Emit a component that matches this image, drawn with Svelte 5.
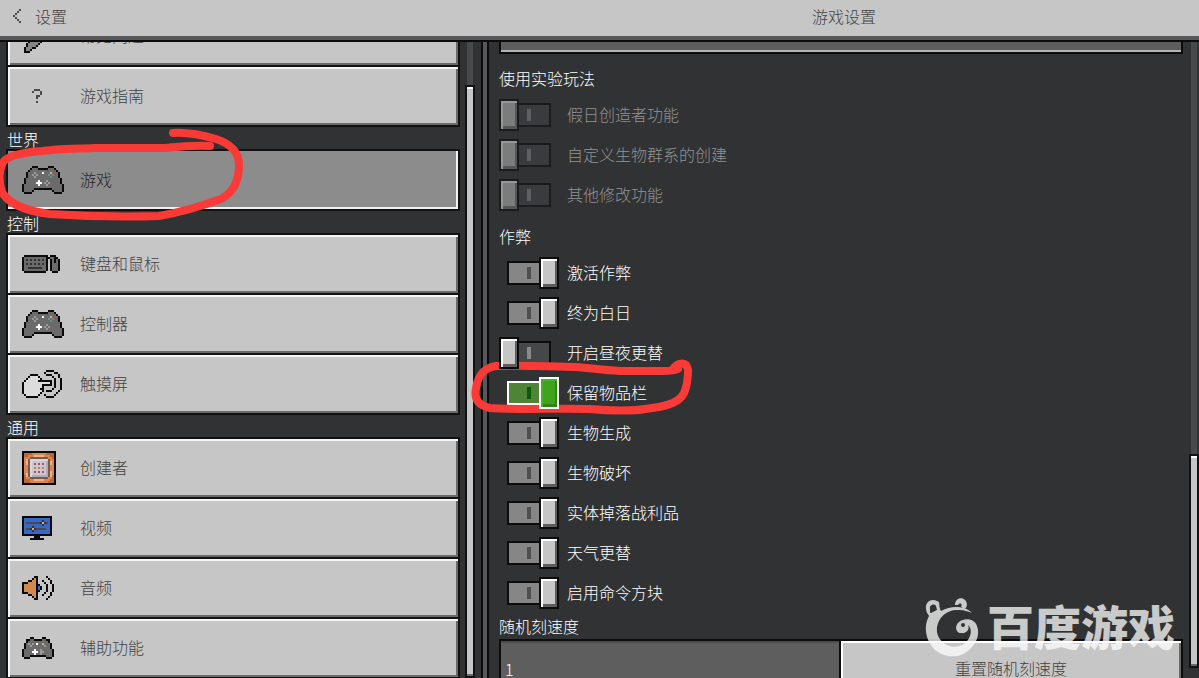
<script>
  const palette = {
    '#': '#0a0a0a', o: '#6b6b6b', l: '#9a9a9a', W: '#ffffff', w: '#dcdcdc', k: '#343434',
    y: '#e0b070', b: '#4aa0b8', r: '#c96a50', t: '#4f9c8c', O: '#cf8b4e', B: '#2f6fd0', q: '#4a4a4a'
  };

  const art = {
    gamepad: [
      '.....###.....###.....', '....#ooo#####ooo#....', '...#ooooooooooooo#...',
      '..#oooloooWoooyooo#..', '..#oololoooooboroo#..', '..#oooloooooootooo#..',
      '.#ooooooooooooooooo#.', '.#ooooooWoooloooooo#.', '.#oooooWWWololooooo#.',
      '#oooooooWoooloooooоo#'.slice(0, 18) + 'oo#', '#ooooooooooooooooooo#', '#ooooo#########ooooo#',
      '#oooo#.........#oooo#', '.####...........####.'
    ],
    keyboard: [
      '.############.###..', '#ooooooooooo##oo##.', '#okokokokoko#.#o#o#',
      '#ooooooooooo#.#o#o#', '#okokokokoko#.#ooo#', '#ooooooooooo#.#ooo#',
      '#ookkkkkkkoo#.#ooo#', '#ooooooooooo#.#ooo#', '.###########...###.'
    ],
    touch: [
      '............####....', '...........#....##..', '....####....###...#.',
      '...#wwww#......#..#.', '..#wwwwww#......#..#', '.#wwwwww#######.#..#',
      '#wwwwwwwwwwwww#.#..#', '#wwwwwwwww#####.#..#', '#wwwwwwwww#.....#..#',
      '#wwwwwwww##....#...#', '#wwwwwwwww#.###...#.', '#wwwwwwww#.......#..',
      '.#wwwwww#..#....#...', '..######....####....'
    ],
    speaker: [
      '......##....#...', '.....#O#.....#..', '...##OO#..#...#.', '###OOOO#...#..#.',
      '#OOOOOO##...#..#', '#OOOOOO#B#..#..#', '#OOOOOO#B#..#..#', '#OOOOOO##...#..#',
      '###OOOO#...#..#.', '...##OO#..#...#.', '.....#O#.....#..', '......##....#...'
    ],
    assist: [
      '....##....##....', '..##oo####oo##..', '..#oooooooooo#..', '.#ololoWooyooo#.',
      '.#oolooooooloo#.', '.#oooooooooooo#.', '#oooooWooloooooo'.slice(0, 15) + '#', '#ooooWWWolloooo#',
      '#oooooWooloooooo'.slice(0, 15) + '#', '#ooo########ooo#', '.###........###.'
    ],
    monitor: [
      '###############', '#BBBBBBBBBBBBB#', '#BBBBBBBBBkBBB#', '#BqqqqqqqkykqB#',
      '#BBBBBBBBBkBBB#', '#BBBBkBBBBBBBB#', '#BqqkykqqqqqBB#', '#BBBBkBBBBBBBB#',
      '#BBBBBBBBBBBBB#', '###############', '......###......', '....#######....'
    ].map((row) => (row.length < 15 ? row.slice(0, 7) + row[7] + row.slice(7) : row)),
    help: ['.qqq.', 'q...q', '....q', '..qq.', '..q..', '.....', '..q..'],
    back: ['...q', '..q.', '.q..', 'q...', '.q..', '..q.', '...q']
  };

  const groups = [
    { title: '', items: [
      { icon: 'pencil', label: '常见问题' },
      { icon: 'help', label: '游戏指南' }
    ] },
    { title: '世界', items: [{ icon: 'gamepad', label: '游戏', active: true }] },
    { title: '控制', items: [
      { icon: 'keyboard', label: '键盘和鼠标' },
      { icon: 'gamepad', label: '控制器' },
      { icon: 'touch', label: '触摸屏' }
    ] },
    { title: '通用', items: [
      { icon: 'creator', label: '创建者' },
      { icon: 'monitor', label: '视频' },
      { icon: 'speaker', label: '音频' },
      { icon: 'assist', label: '辅助功能' }
    ] }
  ];

  const experiments = ['假日创造者功能', '自定义生物群系的创建', '其他修改功能'];

  let cheats = $state([
    { label: '激活作弊', on: true },
    { label: '终为白日', on: true },
    { label: '开启昼夜更替', on: false },
    { label: '保留物品栏', on: true, focus: true },
    { label: '生物生成', on: true },
    { label: '生物破坏', on: true },
    { label: '实体掉落战利品', on: true },
    { label: '天气更替', on: true },
    { label: '启用命令方块', on: true }
  ]);
  let seed = $state('');
  let tickSpeed = $state('1');
</script>

{#snippet pixels(name)}
  {@const rows = art[name]}
  <svg width={rows[0].length * 2} height={rows.length * 2} viewBox="0 0 {rows[0].length} {rows.length}" shape-rendering="crispEdges" aria-hidden="true">
    {#each rows as row, y}
      {#each row.split('') as c, x}
        {#if c !== '.'}<rect {x} {y} width="1" height="1" fill={name === 'monitor' && c === 'B' ? '#3a66c8' : palette[c]} />{/if}
      {/each}
    {/each}
  </svg>
{/snippet}

<div class="page">
  <header>
    <button class="back">{@render pixels('back')}<span>设置</span></button>
    <h1>游戏设置</h1>
  </header>

  <main>
    <div class="side">
      <nav>
        {#each groups as group}
          {#if group.title}<h2>{group.title}</h2>{/if}
          {#each group.items as item}
            <button class="item" class:active={item.active}>
              <span class="icon" class:centered={item.icon === 'help'}>
                {#if item.icon === 'pencil'}
                  <svg width="34" height="34" viewBox="0 0 17 17" shape-rendering="crispEdges" aria-hidden="true">
                    <path d="M1 17V14H2V12H3V11H4V10H5V9H6V8H7V7H8V6H9V5H10V4H11V3H12V2H16V6H15V7H14V8H13V9H12V10H11V11H10V12H9V13H8V14H7V15H5V16H4V17Z" fill="#0a0a0a" />
                    <path d="M2 16V14H3V12H4V11H5V10H6V9H7V8H8V7H9V6H10V5H11V4H12V3H15V6H14V7H13V8H12V9H11V10H10V11H9V12H8V13H7V14H5V15H4V16Z" fill="#858585" />
                  </svg>
                {:else if item.icon === 'creator'}
                  <svg width="34" height="34" viewBox="0 0 17 17" shape-rendering="crispEdges" aria-hidden="true">
                    <rect width="17" height="17" fill="#0a0a0a" />
                    <rect x="1" y="1" width="15" height="15" fill="#d98550" />
                    <path d="M1 3h2v-1h2v-1h-4zM12 1h4v3h-1v-1h-1v-1h-2zM1 12h1v2h2v2h-3zM13 15h1v-1h1v-2h1v4h-3z" fill="#b9683b" />
                    <path d="M2 4h1v3h-1zM6 2h5v1h-5zM14 5h1v2h-1zM2 11h1v2h-1zM6 14h5v1h-5zM14 10h1v3h-1z" fill="#f0b184" />
                    <path d="M4 3h9v1h1v9h-1v1h-9v-1h-1v-9h1z" fill="#765b50" />
                    <rect x="4" y="4" width="9" height="9" fill="#d9d5da" />
                    <rect x="5" y="5" width="8" height="8" fill="#b4acb5" />
                    <rect x="5" y="5" width="7" height="7" fill="#d0c6ce" />
                    <path d="M6 6h1v1h-1zM8 6h1v1h-1zM10 6h1v1h-1zM6 10h1v1h-1zM8 10h1v1h-1zM10 10h1v1h-1z" fill="#985a70" />
                    <path d="M6 8h1v1h-1zM8 8h1v1h-1zM10 8h1v1h-1z" fill="#b98565" />
                  </svg>
                {:else}
                  {@render pixels(item.icon)}
                {/if}
              </span>
              <span class="text">{item.label}</span>
            </button>
          {/each}
        {/each}
      </nav>
      <div class="scroll scroll-left"><div class="thumb"></div></div>
    </div>

    <div class="content">
      <form onsubmit={(e) => e.preventDefault()}>
        <input class="field top" type="text" aria-label="种子" bind:value={seed} />

        <h2>使用实验玩法</h2>
        {#each experiments as name}
          <label class="toggle disabled"><input type="checkbox" disabled /><span class="text">{name}</span></label>
        {/each}

        <h2 class="second">作弊</h2>
        {#each cheats as cheat}
          <label class="toggle" class:focus={cheat.focus}>
            <input type="checkbox" bind:checked={cheat.on} /><span class="text">{cheat.label}</span>
          </label>
        {/each}

        <h2 class="third"><label for="tick">随机刻速度</label></h2>
        <div class="row">
          <input id="tick" class="field" type="text" bind:value={tickSpeed} />
          <button class="reset">重置随机刻速度</button>
        </div>
      </form>
      <div class="scroll scroll-right"><div class="thumb"></div></div>
    </div>
  </main>

  <svg class="marks" width="720" height="440" viewBox="0 0 720 440" fill="none" stroke="#fa3a36" stroke-width="8" stroke-linecap="round" stroke-linejoin="round" aria-hidden="true">
    <path d="M173 133C188 132 202 135 216 139C231 144 239 153 239 165C239 181 234 192 221 199C202 206 182 212 159 216C125 217 80 216 50 214C25 211 8 203 2 192C-2 181 -1 166 5 160C13 154 27 152 42 151C68 148 78 149 95 148L160 148C180 147 194 145 210 146" />
    <path d="M678 369C674 371 668 371 663 371L620 371C600 370 592 368 575 367C545 366 515 365 496 366C483 368 478 376 476 388C474 398 477 405 490 408C520 410 560 408 590 409C610 411 635 411 645 409C662 407 679 404 684 393C688 384 688 377 688 370C687 362 679 361 673 369" />
  </svg>

  <div class="watermark">
    <svg width="54" height="60" viewBox="0 0 54 60" aria-hidden="true">
      <path fill="#fff" fill-rule="evenodd" d="M47 15C40 8 27 7 16 13C13 8 16 4 12 3C6 0 0 4 1 11C1 14 3 16 4 18C-1 27 0 39 6 47C14 60 34 62 44 52C52 45 55 36 52 28C49 20 39 20 34 24C29 28 31 35 36 35C42 36 45 31 43 27C48 31 46 41 39 46C28 53 14 46 12 34C11 20 22 11 34 12C40 12 44 14 47 15ZM5 11C4 7 9 5 11 8L12 12C9 13 7 15 5 15ZM36 27a2 2 0 1 0 4 0a2 2 0 1 0-4 0" />
      <path fill="#fff" d="M30 7C30 1 36-2 40 2C43 5 42 9 40 11L36 9C38 6 35 4 33 7Z" />
    </svg>
    <span>百度游戏</span>
  </div>
</div>

<style>
  :global(body) { margin: 0; background: #313233; overflow: hidden; }
  .page {
    display: flex; flex-direction: column; height: 100vh; position: relative; overflow: hidden;
    background: #313233; color: #fff;
    font: 300 16px/20px "Noto Sans CJK SC", sans-serif;
  }
  .page *, .page *::before, .page *::after { box-sizing: border-box; }
  h1, h2 { margin: 0; font: inherit; }
  button, input { font: inherit; border-radius: 0; margin: 0; }
  svg { display: block; }

  header, main { display: grid; grid-template-columns: minmax(0, 31fr) minmax(0, 45fr); }
  header {
    flex: none; height: 42px; align-items: center; background: #c6c6c6; color: #424242;
    border-bottom: 2px solid #0c0c0c; box-shadow: inset 0 -4px #58585a; padding-bottom: 8px;
  }
  h1 { text-align: center; }
  .back {
    display: flex; align-items: center; gap: 14px; padding: 0 13px;
    border: 0; background: none; color: inherit; justify-self: start;
  }

  main { flex: 1; min-height: 0; }
  .side, .content { display: flex; min-width: 0; min-height: 0; overflow: hidden; }
  .side { border-right: 2px solid #0c0c0c; box-shadow: inset -4px 0 #58585a, inset -6px 0 #0c0c0c; padding: 0 12px 0 6px; gap: 5px; }
  nav { flex: 1; min-width: 0; margin-top: -37px; }
  nav h2 { height: 22px; padding: 3px 1px 0; line-height: 18px; margin-top: 2px; }
  .text { padding-bottom: 2px; }
  .item {
    display: flex; align-items: center; width: 100%; height: 62px; padding: 0 14px; margin-bottom: -2px;
    border: 2px solid #121212; background: #c6c6c6; color: #424242; text-align: left;
    box-shadow: inset 2px 2px #f6f6f6, inset -2px -2px #6a6a6a;
  }
  .item.active { background: #8c8c8c; color: #242424; box-shadow: inset -2px -2px #f0f0f0; }
  .icon { flex: none; width: 58px; }
  .icon.centered { padding-left: 10px; }

  .scroll { flex: none; display: flex; flex-direction: column; width: 10px; }
  .scroll::before { content: ''; margin: 0 2px; background: #48494a; }
  .thumb {
    border: 2px solid #121212; background: #c6c6c6;
    box-shadow: inset 0 2px #fff, inset 0 -2px #6a6a6a;
  }
  .scroll-left::before { flex: 43; }
  .scroll-left .thumb { flex: 593; }
  .scroll-right::before { flex: 413; }
  .scroll-right .thumb { flex: 211; }
  .scroll-right { padding-bottom: 10px; }

  .content { padding-left: 10px; }
  form { flex: 1; min-width: 0; margin-top: -48px; padding-right: 6px; }
  form h2 { height: 41px; padding: 14px 0 0; }
  form h2.second { height: 38px; padding-top: 11px; }
  form h2.third { height: 26px; padding-top: 3px; }
  .field {
    display: block; width: 100%; height: 60px; padding: 0 4px; color: #fff;
    border: 2px solid #0c0c0c; background: #5e5e5e; outline: 0; box-shadow: inset 0 2px #4c4c4c;
  }
  .field.top { box-shadow: inset 0 -2px #b4b4b4; }
  .row { display: grid; grid-template-columns: 1fr 1fr; }
  .reset {
    height: 60px; margin-left: -2px; border: 2px solid #0c0c0c; padding: 0 0 2px; min-width: 0;
    background: #c6c6c6; color: #424242; box-shadow: inset 2px 2px #fff, inset -2px -2px #6a6a6a;
  }

  .toggle { display: flex; align-items: center; gap: 8px; height: 40px; --edge: #0c0c0c; --knob: #c6c6c6; --light: #fff; --dark: #5e5e5e; --track: #464748; --mark: #8a8a8a; }
  .toggle input { flex: none; display: flex; align-items: center; appearance: none; width: 60px; height: 32px; outline: 0; }
  .toggle input::before {
    content: ''; order: 2; flex: none; width: 34px; height: 24px; margin-left: -2px; border: 2px solid var(--edge);
    background: linear-gradient(var(--mark) 0 0) 8px 4px / 4px 12px no-repeat var(--track);
  }
  .toggle input::after {
    content: ''; order: 1; flex: none; z-index: 1; width: 20px; height: 32px; border: 2px solid var(--edge);
    background: var(--knob); box-shadow: inset 2px 2px var(--light), inset -2px -3px var(--dark);
  }
  .toggle input:checked::before { order: 1; margin-left: 8px; background-position: 18px 4px; }
  .toggle input:checked::after { order: 2; margin-left: -2px; }
  .toggle:has(:checked) { --track: #868686; --mark: #4e4e4e; }
  .toggle.disabled { color: #929394; --edge: #1c1c1c; --knob: #7b7d7c; --light: #969897; --dark: #565857; --track: #3a3b3c; --mark: #5e6060; }
  .toggle.focus { --edge: #fff; --track: #4f8338; --mark: #0b5a08; --knob: #3fa31d; --light: #4caf2a; --dark: #2f8512; }

  .marks { position: absolute; left: 0; top: 0; pointer-events: none; }
  .watermark {
    position: absolute; right: 24px; bottom: 20px; display: flex; align-items: flex-start; gap: 8px;
    opacity: .74; pointer-events: none;
  }
  .watermark span { font-size: 47px; line-height: 54px; font-weight: 900; }
</style>
